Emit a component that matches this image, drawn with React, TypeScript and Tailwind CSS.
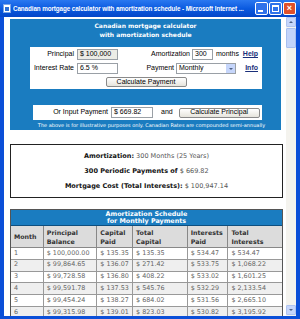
const sans = { fontFamily: '"Liberation Sans", Arial, sans-serif' };
const verd = { fontFamily: '"DejaVu Sans", Verdana, sans-serif' };

function TitleBar() {
  return (
    <div className="h-[17px] flex items-center pl-[3px] pr-[4px] bg-gradient-to-b from-[#2a78f0] via-[#0a5ae0] to-[#0546c8] shrink-0">
      <div className="w-[8px] h-[9px] bg-white border border-[#7aa6e8] flex items-center justify-center mr-[2px]">
        <div className="w-[4px] h-[4px] bg-[#2a6fd6]" />
      </div>
      <div className="flex-1 min-w-0 text-white font-bold text-[6.3px] whitespace-nowrap overflow-hidden tracking-[-0.1px]" style={sans}>
        Canadian mortgage calculator with amortization schedule - Microsoft Internet ...
      </div>
      <div className="flex gap-[1px] ml-[2px]">
        <div className="w-[13px] h-[13px] rounded-[2px] border border-white bg-[#2f72ea] flex items-end justify-start p-[2px]">
          <div className="w-[5px] h-[2px] bg-white" />
        </div>
        <div className="w-[13px] h-[13px] rounded-[2px] border border-white bg-[#2f72ea] flex items-center justify-center">
          <div className="w-[7px] h-[7px] border border-white border-t-2" />
        </div>
        <div className="w-[13px] h-[13px] rounded-[2px] border border-white bg-[#e0502a] flex items-center justify-center text-white text-[9px] font-bold leading-none" style={sans}>
          ×
        </div>
      </div>
    </div>
  );
}

function Scrollbar() {
  return (
    <div className="w-[10px] bg-[#f4f3ee] flex flex-col">
      <div className="h-[10px] bg-[#c6d6fb] border border-[#b0c4f0] rounded-[1px] flex items-center justify-center">
        <div className="w-0 h-0 border-l-[2px] border-r-[2px] border-b-[2px] border-l-transparent border-r-transparent border-b-[#4d6185]" />
      </div>
      <div className="h-[20px] mt-[1px] bg-[#c3d4fa] border border-[#a8bff0] rounded-[1px]" />
      <div className="flex-1" />
      <div className="h-[10px] bg-[#c6d6fb] border border-[#b0c4f0] rounded-[1px] flex items-center justify-center mb-[1px]">
        <div className="w-0 h-0 border-l-[2px] border-r-[2px] border-t-[2px] border-l-transparent border-r-transparent border-t-[#4d6185]" />
      </div>
    </div>
  );
}

function Input({ w, value, grey }: { w: number; value: string; grey?: boolean }) {
  return (
    <div
      className={`h-[11px] border border-[#9aa0a6] flex items-center px-[2px] text-[7px] text-black ${grey ? 'bg-[#ecece6]' : 'bg-white'}`}
      style={{ width: w, ...sans }}
    >
      {value}
    </div>
  );
}

function Button({ w, label }: { w: number; label: string }) {
  return (
    <div
      className="h-[10px] border border-[#8a8a8a] rounded-[2px] bg-gradient-to-b from-white to-[#e6e4dc] flex items-center justify-center text-[7px] text-black"
      style={{ width: w, ...sans }}
    >
      {label}
    </div>
  );
}

function Panel() {
  return (
    <div className="mt-[2px] mr-[2px] h-[111px] bg-[#1a7cc0] flex flex-col shrink-0">
      <div className="pt-[2px] text-center text-white font-bold text-[6px] leading-[9px]" style={verd}>
        <div>Canadian mortgage calculator</div>
        <div>with amortization schedule</div>
      </div>
      <div className="mt-[8px] ml-[20px] w-[232px] h-[42px] bg-white flex flex-col pt-[2px]" style={sans}>
        <div className="flex items-center h-[11px] text-[7px] text-black">
          <div className="w-[44px] text-right">Principal</div>
          <div className="w-[3px]" />
          <Input w={41} value="$ 100,000" grey />
          <div className="w-[72px] text-right">Amortization</div>
          <div className="w-[2px]" />
          <Input w={21} value="300" />
          <div className="ml-[3px]">months</div>
          <div className="flex-1 text-right pr-[4px] font-bold underline text-[#1a2f7a]">Help</div>
        </div>
        <div className="flex items-center h-[11px] mt-[3px] text-[7px] text-black">
          <div className="w-[44px] text-right whitespace-nowrap">Interest Rate</div>
          <div className="w-[3px]" />
          <Input w={41} value="6.5 %" />
          <div className="w-[56px] text-right">Payment</div>
          <div className="w-[2px]" />
          <div className="w-[60px] h-[11px] border border-[#9aa0a6] bg-white flex items-center">
            <div className="flex-1 pl-[2px] text-[7px]">Monthly</div>
            <div className="w-[9px] h-[9px] bg-[#c6d6fb] flex items-center justify-center">
              <div className="w-0 h-0 border-l-[2px] border-r-[2px] border-t-[2px] border-l-transparent border-r-transparent border-t-[#4d6185]" />
            </div>
          </div>
          <div className="flex-1 text-right pr-[4px] font-bold underline text-[#1a2f7a]">Info</div>
        </div>
        <div className="flex justify-center mt-[3px]">
          <Button w={81} label="Calculate Payment" />
        </div>
      </div>
      <div className="mt-[16px] ml-[23px] w-[229px] h-[15px] bg-white flex items-center text-[7px] text-black" style={sans}>
        <div className="w-[75px] text-right">Or Input Payment</div>
        <div className="w-[3px]" />
        <Input w={42} value="$ 669.82" />
        <div className="ml-[8px]">and</div>
        <div className="ml-[6px]">
          <Button w={81} label="Calculate Principal" />
        </div>
      </div>
      <div className="mt-[2px] ml-[12px] text-center text-white text-[5px] leading-[6px] whitespace-nowrap" style={verd}>
        The above is for illustrative purposes only. Canadian Rates are compounded semi-annually
      </div>
    </div>
  );
}

function Summary() {
  return (
    <div className="mt-[14px] h-[54px] border-[1.5px] border-[#222] flex flex-col items-center justify-center gap-[7px] text-[6.5px] leading-[8px] shrink-0" style={verd}>
      <div><span className="font-bold text-[#111]">Amortization:</span> <span className="text-[#555]">300 Months (25 Years)</span></div>
      <div><span className="font-bold text-[#111]">300 Periodic Payments of</span> <span className="text-[#555]">$ 669.82</span></div>
      <div><span className="font-bold text-[#111]">Mortgage Cost (Total Interests):</span> <span className="text-[#555]">$ 100,947.14</span></div>
    </div>
  );
}

const cols = [33, 54, 36, 55, 41, 54];
const heads = [
  ['Month'],
  ['Principal', 'Balance'],
  ['Capital', 'Paid'],
  ['Total', 'Capital'],
  ['Interests', 'Paid'],
  ['Total', 'Interests'],
];
const rows = [
  ['1', '$ 100,000.00', '$ 135.35', '$ 135.35', '$ 534.47', '$ 534.47'],
  ['2', '$ 99,864.65', '$ 136.07', '$ 271.42', '$ 533.75', '$ 1,068.22'],
  ['3', '$ 99,728.58', '$ 136.80', '$ 408.22', '$ 533.02', '$ 1,601.25'],
  ['4', '$ 99,591.78', '$ 137.53', '$ 545.76', '$ 532.29', '$ 2,133.54'],
  ['5', '$ 99,454.24', '$ 138.27', '$ 684.02', '$ 531.56', '$ 2,665.10'],
  ['6', '$ 99,315.98', '$ 139.01', '$ 823.03', '$ 530.82', '$ 3,195.92'],
];

function Table() {
  return (
    <div className="mt-[11px] border border-[#555] shrink-0" style={verd}>
      <div className="h-[16px] bg-[#1a7cc0] border-b border-[#0d4f80] flex flex-col items-center justify-center text-white font-bold text-[6.4px] leading-[7px]">
        <div>Amortization Schedule</div>
        <div>for Monthly Payments</div>
      </div>
      <div className="flex h-[22px] bg-[#dcdcdc] border-b border-[#888]">
        {heads.map((h, i) => (
          <div
            key={i}
            className={`flex flex-col justify-center pl-[3px] font-bold text-[#333] text-[6.3px] leading-[9px] ${i < 5 ? 'border-r border-[#888]' : ''}`}
            style={{ width: cols[i] }}
          >
            {h.map((t) => (
              <div key={t}>{t}</div>
            ))}
          </div>
        ))}
      </div>
      {rows.map((r, ri) => (
        <div key={ri} className={`flex h-[11.8px] border-b border-[#999] ${ri % 2 === 1 ? 'bg-[#efefef]' : 'bg-white'}`}>
          {r.map((c, ci) => (
            <div
              key={ci}
              className={`flex items-center pl-[3px] text-[#666] text-[6.4px] whitespace-nowrap ${ci < 5 ? 'border-r border-[#999]' : ''}`}
              style={{ width: cols[ci] }}
            >
              {c}
            </div>
          ))}
        </div>
      ))}
    </div>
  );
}

export default function App() {
  return (
    <div className="w-[300px] h-[319px] bg-[#0b4fd8] flex flex-col overflow-hidden">
      <TitleBar />
      <div className="flex flex-1 min-h-0 pl-[4px] pr-[4px] pb-[3px]">
        <div className="flex-1 min-w-0 bg-white flex flex-col pl-[6px] pr-[3px] overflow-hidden">
          <Panel />
          <Summary />
          <Table />
        </div>
        <Scrollbar />
      </div>
    </div>
  );
}
